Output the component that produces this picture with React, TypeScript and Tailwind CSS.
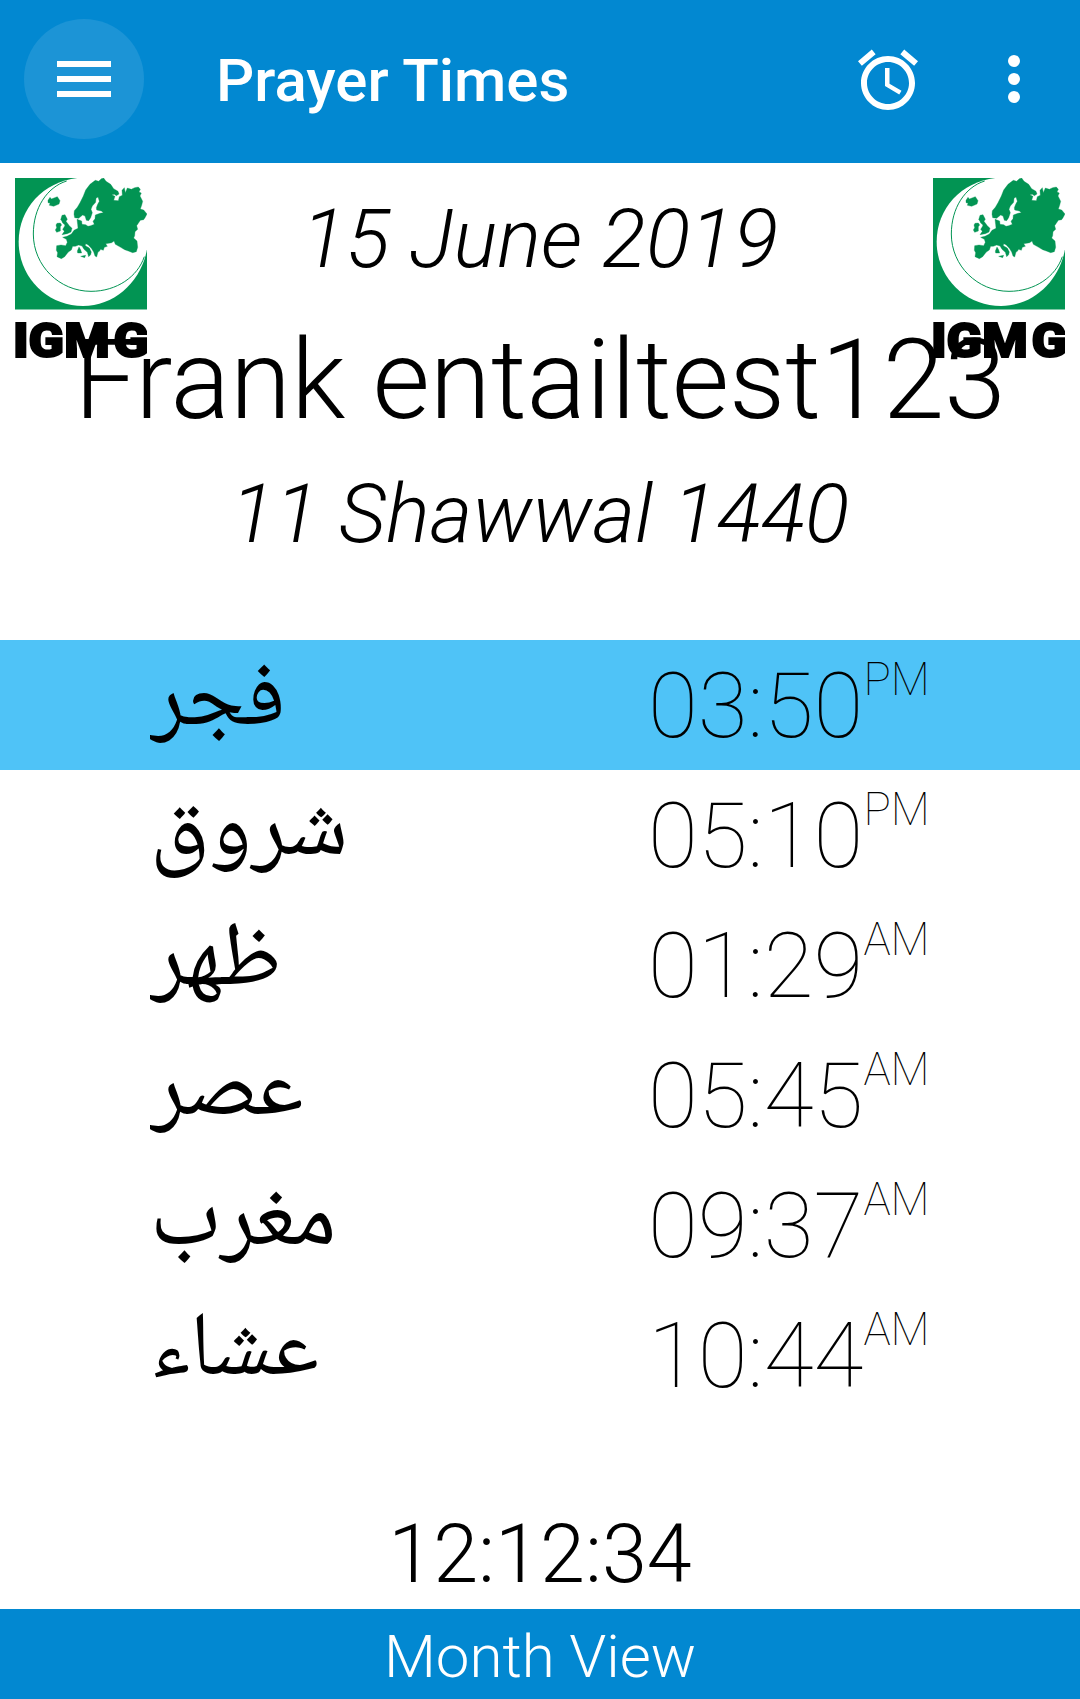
import React from "react";

const prayers = [
  { name: "فجر", time: "03:50", period: "PM", active: true },
  { name: "شروق", time: "05:10", period: "PM", active: false },
  { name: "ظهر", time: "01:29", period: "AM", active: false },
  { name: "عصر", time: "05:45", period: "AM", active: false },
  { name: "مغرب", time: "09:37", period: "AM", active: false },
  { name: "عشاء", time: "10:44", period: "AM", active: false },
];

function Logo() {
  return (
    <svg className="block h-[182px] w-[132px]" viewBox="45 54 396 546" aria-label="IGMG">
      <defs>
        <clipPath id="emblem"><rect x="45" y="54" width="396" height="395" /></clipPath>
      </defs>
      <g clipPath="url(#emblem)">
        <rect x="45" y="54" width="396" height="395" fill="#029453" />
        <path d="M232 54C130 66 56 145 56 245C56 352 142 438 249 438C344 438 424 364 441 268V54Z" fill="#fff" />
        <path d="M200 63C140 82 100 145 100 222C100 317 178 394 273 394C350 394 413 350 433 290" fill="none" stroke="#029453" strokeWidth="3" />
      </g>
      <g fill="#029453" stroke="#029453" strokeWidth="1" strokeLinejoin="round">
        <path d="M144 121L150 112L154 117L172 110L180 122L177 132L161 139L148 136L150 129L144 128Z" />
        <path d="M186 166L195 164L202 178L198 184L208 197L216 205L213 216L202 221L186 224L193 214L188 208L193 200L195 195L188 189L185 182L182 179Z" />
        <path d="M171 190L181 189L185 195L181 200L181 213L170 217L166 210L170 203L168 195Z" />
        <path d="M222 163L223 152L232 142L240 128L250 108L257 90L270 73L286 61L296 64L304 56L311 54L318 64L332 73L341 86L354 94L357 102L349 107L343 103L335 104L345 109L341 121L355 122L358 110L367 106L366 91L373 83L376 98L382 84L394 88L404 83L415 81L421 88L417 96L424 99L420 108L428 124L425 136L421 147L431 150L441 162L435 173L431 179L421 181L410 197L413 208L405 215L404 227L401 234L411 243L413 262L409 275L398 278L385 273L374 269L362 262L346 253L342 243L335 248L326 250L317 251L322 259L313 262L310 271L302 268L298 274L294 276L290 291L285 288L281 276L274 265L264 254L257 251L256 257L268 264L274 276L272 284L266 290L262 277L252 268L246 258L236 255L226 259L218 259L214 270L205 276L194 290L184 296L171 290L173 278L169 271L170 257L183 255L197 257L202 247L199 238L188 232L201 229L214 222L222 211L234 205L233 194L231 178L245 183L246 193L257 194L264 199L272 197L283 193L279 184L285 176L286 165L300 160L310 158L304 153L290 150L289 143L293 133L298 124L294 111L288 115L287 127L277 138L273 148L277 158L272 173L266 182L259 181L255 168L248 165L236 175L224 173Z" />
        <path d="M237 261L242 269L245 279L233 279L232 273ZM242 289L257 286L254 293Z" />
      </g>
      <text x="37 81 182 321" y="591" transform="scale(1.06 1)" fontFamily="Roboto, sans-serif" fontSize="147" fontWeight="900" stroke="#000" strokeWidth="6">IGMG</text>
    </svg>
  );
}

export default function App() {
  return (
    <div className="relative flex h-[1699px] w-[1080px] flex-col overflow-hidden bg-white font-['Roboto',sans-serif] text-black">
      <header className="flex h-[163px] shrink-0 items-center bg-[#0288d1] pb-[5px] text-white">
        <button aria-label="Menu" className="ml-6 flex size-[120px] items-center justify-center rounded-full bg-[#1c94d6]">
          <span className="flex w-[54px] flex-col gap-[9px]">
            <span className="h-[6px] bg-white" /><span className="h-[6px] bg-white" /><span className="h-[6px] bg-white" />
          </span>
        </button>
        <h1 className="mt-1 ml-[72px] text-[60px] leading-[70px] font-medium whitespace-nowrap">Prayer Times</h1>
        <svg className="mt-0.5 ml-auto size-[72px]" viewBox="0 0 24 24" fill="#fff">
          <path d="M22 5.72l-4.6-3.86-1.29 1.53 4.6 3.86L22 5.72zM7.88 3.39L6.6 1.86 2 5.71l1.29 1.53 4.59-3.85zM12.5 8H11v6l4.75 2.85.75-1.23-4-2.37V8zM12 4c-4.97 0-9 4.03-9 9s4.02 9 9 9c4.97 0 9-4.03 9-9s-4.03-9-9-9zm0 16c-3.87 0-7-3.13-7-7s3.13-7 7-7 7 3.13 7 7-3.13 7-7 7z" />
        </svg>
        <button aria-label="More" className="mr-[60px] ml-[84px] flex flex-col gap-[6px]">
          <span className="size-3 rounded-full bg-white" /><span className="size-3 rounded-full bg-white" /><span className="size-3 rounded-full bg-white" />
        </button>
      </header>

      <section className="flex h-[477px] shrink-0 flex-col items-center font-light whitespace-nowrap">
        <p className="mt-[28px] text-[82px] leading-[96px] italic">15 June 2019</p>
        <p className="mt-[28px] text-[111px] leading-[130px]">Frank entailtest123</p>
        <p className="mt-[21px] text-[82px] leading-[96px] italic">11 Shawwal 1440</p>
      </section>
      <div className="absolute top-[178px] left-[15px]"><Logo /></div>
      <div className="absolute top-[178px] left-[933px]"><Logo /></div>

      <main className="flex flex-col">
        {prayers.map((p) => (
          <div key={p.name} className={p.active ? "flex h-[130px] bg-[#4fc3f7]" : "flex h-[130px]"}>
            <div className="ml-[150px] h-[130px] w-[498px] overflow-hidden text-[91px] leading-[130px] font-['Noto_Naskh_Arabic','DejaVu_Sans',sans-serif]">
              <span dir="rtl" lang="ar">{p.name}</span>
            </div>
            <div className="flex font-thin">
              <span className="mt-[13px] text-[91px] leading-[106px]">{p.time}</span>
              <span className="mt-[13px] text-[45.5px] leading-[54px]">{p.period}</span>
            </div>
          </div>
        ))}
      </main>

      <p className="mt-[87px] text-center text-[81px] leading-[96px] font-light">12:12:34</p>
      <footer className="mt-auto flex h-[90px] shrink-0 items-center justify-center bg-[#0288d1] pt-[6px] text-[60px] font-light text-white">Month View</footer>
    </div>
  );
}
